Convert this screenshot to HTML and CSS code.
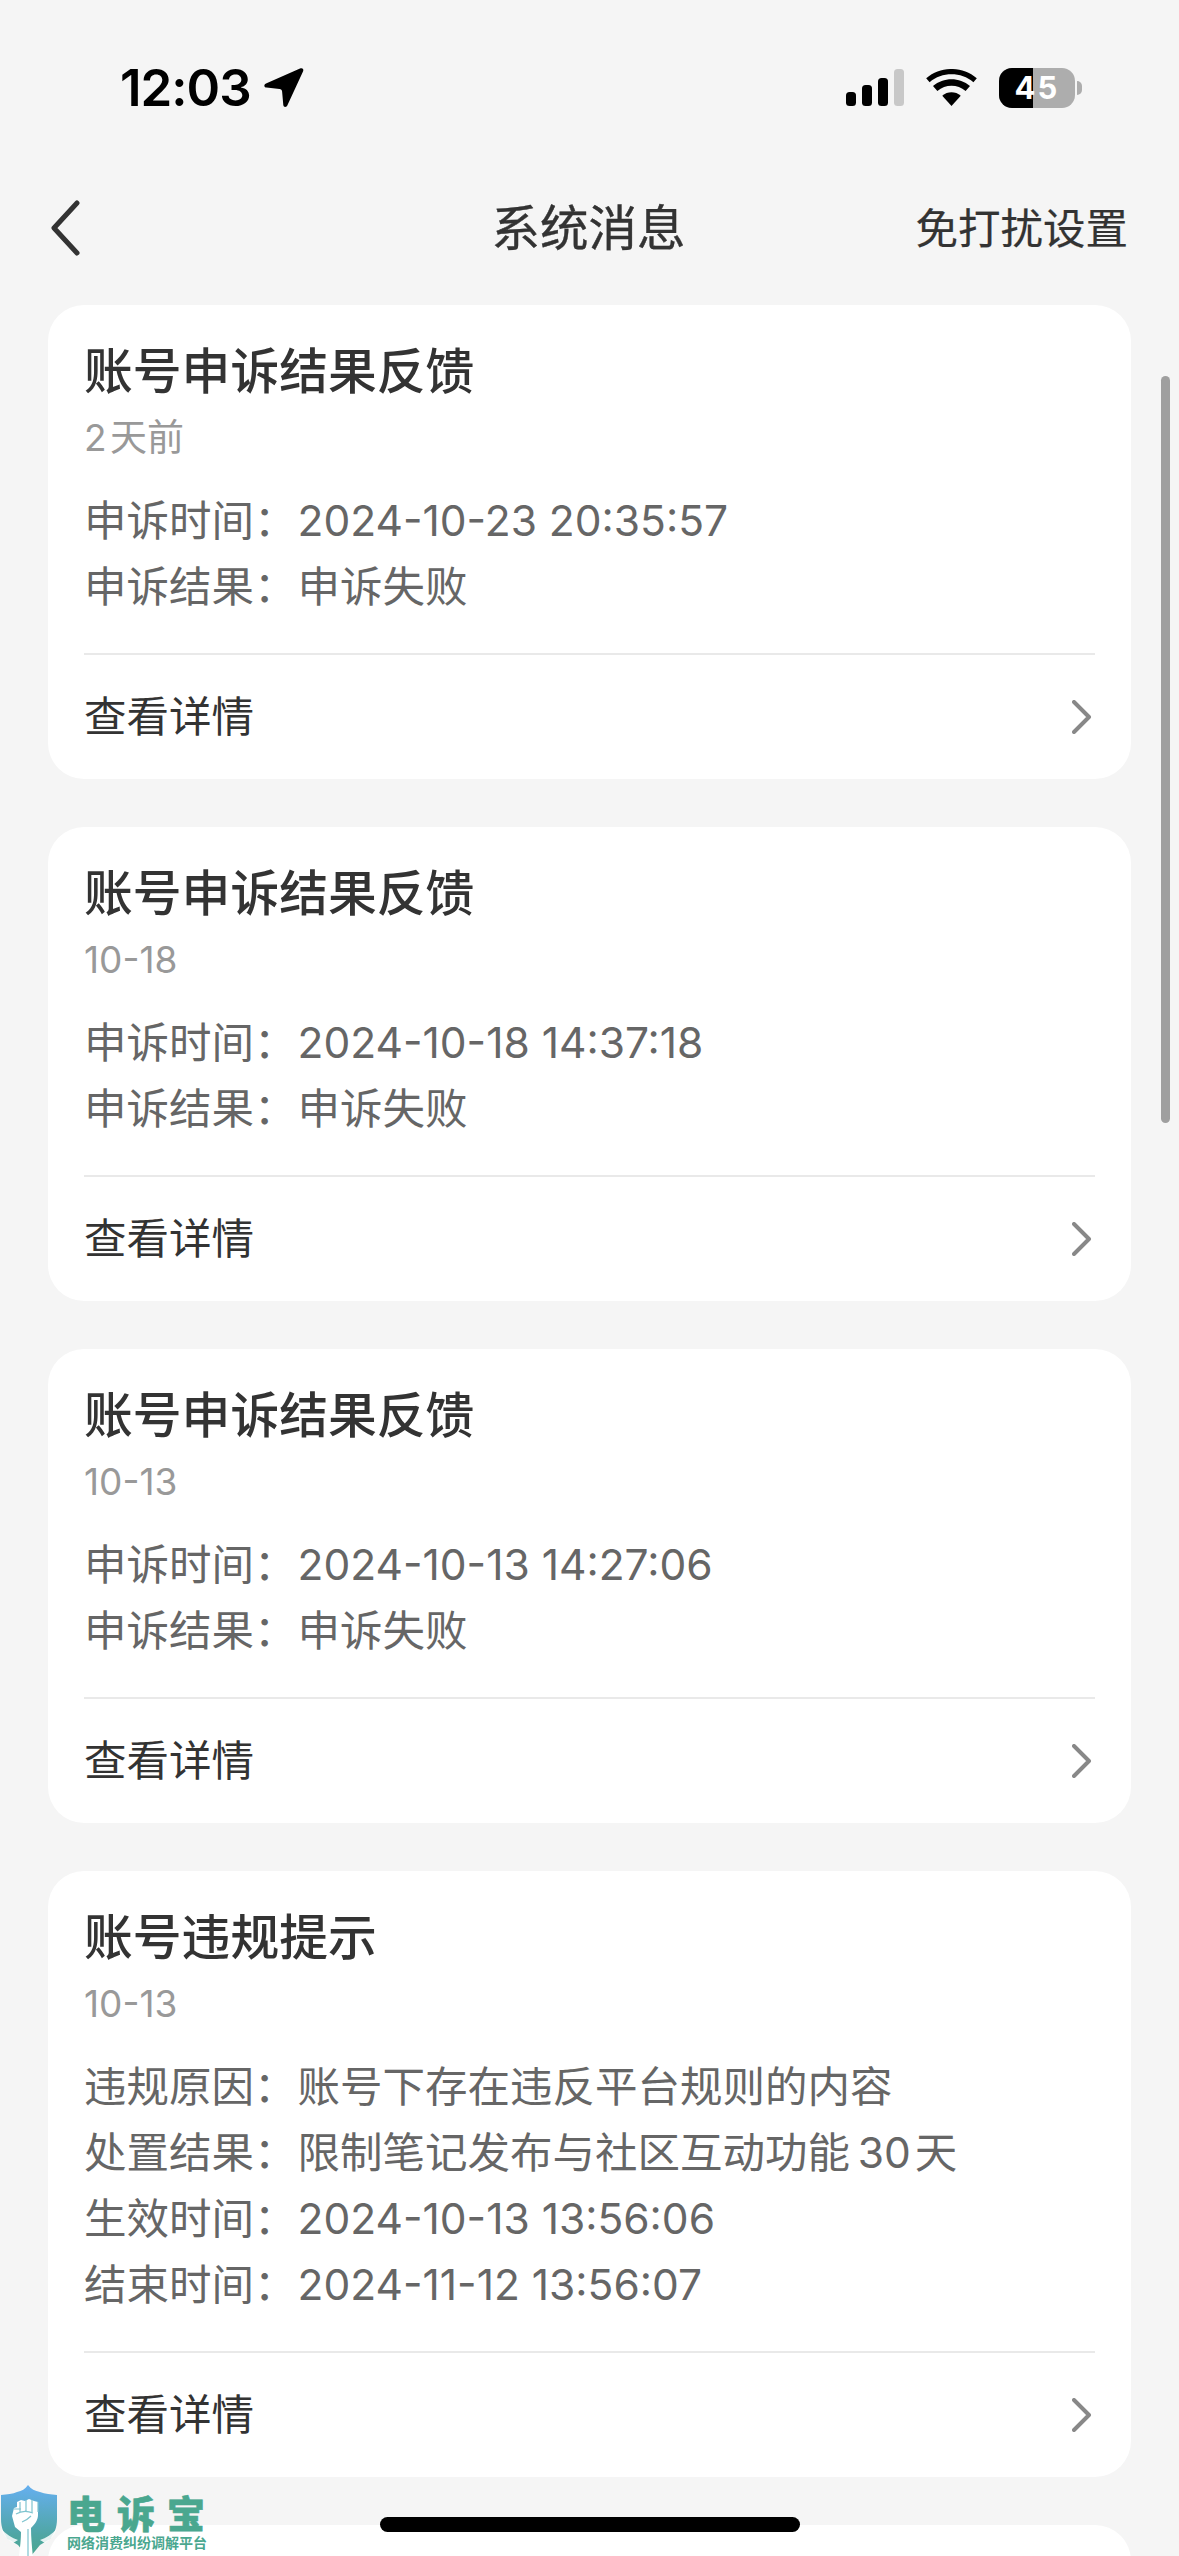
FILE: index.html
```html
<!DOCTYPE html>
<html lang="zh-CN">
<head>
<meta charset="UTF-8">
<title>系统消息</title>
<link rel="stylesheet" href="styles.css">
</head>
<body>
    <div class="status-bar">
        <div class="status-left">
            <span class="clock">12:03</span>
            <svg class="location" width="40" height="40" viewBox="0 0 40 40"><path d="M36 .5 2 15.500c-2.500 1.200-2 3.800.5 4l13 1.500c1.500.2 2.500 1 2.600 2.500l1.200 13.500c.2 2.300 3 2.700 4 .5L39 3.500c1-2.500-.5-4-3-3z"/></svg>
        </div>
        <div class="status-right">
            <svg class="signal" width="58" height="37" viewBox="0 0 58 37">
                <rect x="0" y="23" width="10" height="14" rx="3.500"/>
                <rect x="16" y="16" width="10" height="21" rx="3.500"/>
                <rect x="32" y="9" width="10" height="28" rx="3.500"/>
                <rect x="48" y="0" width="10" height="37" rx="3.500" fill="#c8c8c8"/>
            </svg>
            <svg class="wifi" width="51" height="37" viewBox="0 0 52 38">
                <path d="M26 38 16.500 27.500c5.500-4.700 13.500-4.700 19 0z"/>
                <path d="M11.500 22.500 7 17.500c10.800-9.300 27.200-9.300 38 0l-4.500 5c-8.300-7-20.700-7-29 0z"/>
                <path d="M3.500 13.500 0 9.500C15-3.200 37-3.200 52 9.500l-3.500 4C35.800 2.800 16.200 2.800 3.500 13.500z"/>
            </svg>
            <div class="battery">
                <div class="battery-body"><span class="battery-fill"></span><span class="battery-num">45</span></div>
                <span class="battery-tip"></span>
            </div>
        </div>
    </div>

    <div class="nav">
        <svg class="back" width="32" height="56" viewBox="0 0 32 56"><path d="M28 3 5 28l23 25" fill="none" stroke="#333" stroke-width="5" stroke-linecap="round" stroke-linejoin="round"/></svg>
        <div class="nav-title">系统消息</div>
        <div class="nav-action">免打扰设置</div>
    </div>

    <div class="list">
        <div class="card">
            <h2>账号申诉结果反馈</h2>
            <p class="meta">2&#8202;天前</p>
            <div class="rows">
                <p><span class="label">申诉时间：</span>2024-10-23 20:35:57</p>
                <p><span class="label">申诉结果：</span>申诉失败</p>
            </div>
            <div class="more">
                <span>查看详情</span>
                <svg width="20" height="34" viewBox="0 0 20 34"><path d="M2 2l15 15L2 32" fill="none" stroke="#888" stroke-width="4" stroke-linecap="round" stroke-linejoin="round"/></svg>
            </div>
        </div>
        <div class="card">
            <h2>账号申诉结果反馈</h2>
            <p class="meta">10-18</p>
            <div class="rows">
                <p><span class="label">申诉时间：</span>2024-10-18 14:37:18</p>
                <p><span class="label">申诉结果：</span>申诉失败</p>
            </div>
            <div class="more">
                <span>查看详情</span>
                <svg width="20" height="34" viewBox="0 0 20 34"><path d="M2 2l15 15L2 32" fill="none" stroke="#888" stroke-width="4" stroke-linecap="round" stroke-linejoin="round"/></svg>
            </div>
        </div>
        <div class="card">
            <h2>账号申诉结果反馈</h2>
            <p class="meta">10-13</p>
            <div class="rows">
                <p><span class="label">申诉时间：</span>2024-10-13 14:27:06</p>
                <p><span class="label">申诉结果：</span>申诉失败</p>
            </div>
            <div class="more">
                <span>查看详情</span>
                <svg width="20" height="34" viewBox="0 0 20 34"><path d="M2 2l15 15L2 32" fill="none" stroke="#888" stroke-width="4" stroke-linecap="round" stroke-linejoin="round"/></svg>
            </div>
        </div>
        <div class="card">
            <h2>账号违规提示</h2>
            <p class="meta">10-13</p>
            <div class="rows">
                <p><span class="label">违规原因：</span>账号下存在违反平台规则的内容</p>
                <p><span class="label">处置结果：</span>限制笔记发布与社区互动功能&#8201;30&#8202;天</p>
                <p><span class="label">生效时间：</span>2024-10-13 13:56:06</p>
                <p><span class="label">结束时间：</span>2024-11-12 13:56:07</p>
            </div>
            <div class="more">
                <span>查看详情</span>
                <svg width="20" height="34" viewBox="0 0 20 34"><path d="M2 2l15 15L2 32" fill="none" stroke="#888" stroke-width="4" stroke-linecap="round" stroke-linejoin="round"/></svg>
            </div>
        </div>
        <div class="card card-peek"></div>
    </div>

    <div class="scrollbar"></div>
    <div class="home-indicator"></div>

    <div class="watermark">
        <svg class="shield" width="58" height="71" viewBox="0 0 58 71">
            <defs>
                <linearGradient id="shieldFill" x1="0" y1="0" x2="0" y2="1">
                    <stop offset="0" stop-color="#66aff0"/>
                    <stop offset="0.7" stop-color="#4fa6a4"/>
                    <stop offset="1" stop-color="#4aa78f"/>
                </linearGradient>
            </defs>
            <path d="M28 0c3 4 7 6 12 7 5 2 11 2 17 3v24c0 9-3 15-7 20l-10 6-9 11h-4l-9-11-10-6C4 49 1 43 1 34V10c6-1 12-1 16-3 5-1 8-3 11-7z" fill="url(#shieldFill)"/>
            <path d="M1 44c3 7 7 11 12 14l5-3c-6-2-12-6-17-11zM57 44c-3 7-7 11-12 14l-5-3c6-2 12-6 17-11z" fill="#fff" opacity="0.85"/>
            <path d="M19 71c1-9 2-16 2-24l-6-5-3-11 2-8 3-1V17l4-2 4 1 4-2 5 2 4 1v13c0 5-3 9-7 13 0 10 1 19 2 30z" fill="#fff"/>
            <path d="M20 17v10M26 15v12M32 15v12M38 17v10M14 24h7M16 29c5-3 12-3 17-1M22 37c3-1 6-3 9-6M28 44v27" fill="none" stroke="#7fc4cf" stroke-width="1.200"/>
        </svg>
        <div class="watermark-text">
            <div class="watermark-name">电诉宝</div>
            <div class="watermark-sub">网络消费纠纷调解平台</div>
        </div>
    </div>
</body>
</html>
```

FILE: styles.css
```css
* {
    box-sizing: border-box;
}

html, body {
    margin: 0;
    height: 2556px;
    overflow: hidden;
}

body {
    position: relative;
    background: #f5f5f5;
    font-family: "Inter", "Noto Sans CJK SC", sans-serif;
    color: #333;
}

p, h2 {
    margin: 0;
    font-weight: 400;
}

.status-bar {
    display: flex;
    justify-content: space-between;
    align-items: flex-start;
    height: 167px;
    padding: 67px 97px 0 120px;
}

.status-left {
    display: flex;
    align-items: center;
    gap: 13px;
    height: 41px;
}

.clock {
    font-size: 51px;
    font-weight: 600;
    line-height: 41px;
    letter-spacing: -1px;
    color: #000;
}

.status-right {
    display: flex;
    align-items: center;
    gap: 22px;
    height: 41px;
}

.battery {
    display: flex;
    align-items: center;
    gap: 2px;
}

.battery-body {
    position: relative;
    width: 76px;
    height: 40px;
    border-radius: 13px;
    background: #adadad;
    overflow: hidden;
    display: flex;
    align-items: center;
    justify-content: center;
}

.battery-fill {
    position: absolute;
    left: 0;
    top: 0;
    bottom: 0;
    width: 34px;
    background: #000;
}

.battery-num {
    position: relative;
    font-size: 31px;
    font-weight: 700;
    letter-spacing: 2px;
    color: #fff;
}

.battery-tip {
    width: 5px;
    height: 14px;
    border-radius: 0 6px 6px 0;
    background: #adadad;
}

.nav {
    display: grid;
    grid-template-columns: 1fr auto 1fr;
    align-items: center;
    height: 120px;
    padding: 0 51px 0 49px;
}

.nav-title {
    font-size: 48.500px;
    line-height: 120px;
    padding-top: 2px;
    -webkit-text-stroke: 0.4px #333;
}

.nav-action {
    font-size: 42.500px;
    justify-self: end;
    padding-bottom: 6px;
    -webkit-text-stroke: 0.2px #333;
}

.list {
    display: flex;
    flex-direction: column;
    gap: 48px;
    padding: 18px 48px 0;
}

.card {
    flex: none;
    background: #fff;
    border-radius: 36px;
    padding: 34px 36px 0;
}

.card-peek {
    height: 120px;
}

.card h2 {
    font-size: 48.800px;
    font-weight: 500;
    line-height: 66px;
    color: #333;
}

.meta {
    margin-top: 10px;
    font-size: 37px;
    line-height: 46px;
    color: #999;
}

.rows {
    margin-top: 27px;
    padding-bottom: 33px;
    border-bottom: 2px solid #e9e9e9;
    font-size: 42.500px;
    line-height: 66px;
    color: #666;
}

.label {
    margin-right: 1px;
}

.more {
    display: flex;
    justify-content: space-between;
    align-items: center;
    height: 124px;
    padding-right: 3px;
    font-size: 42.500px;
    color: #333;
}

.more span {
    padding-bottom: 7px;
}

.scrollbar {
    position: absolute;
    left: 1161px;
    top: 376px;
    width: 9px;
    height: 747px;
    border-radius: 5px;
    background: #9f9f9f;
}

.home-indicator {
    position: absolute;
    left: 380px;
    top: 2517px;
    width: 420px;
    height: 15px;
    border-radius: 8px;
    background: #000;
}

.watermark {
    position: absolute;
    left: 0;
    top: 2485px;
    display: flex;
    gap: 9px;
    color: #4aa78f;
}

.watermark-text {
    padding-top: 6px;
}

.watermark-name {
    font-size: 38px;
    font-weight: 900;
    line-height: 46px;
    letter-spacing: 12px;
    -webkit-text-stroke: 0.6px #4aa78f;
}

.watermark-sub {
    margin-top: -2px;
    font-size: 14px;
    font-weight: 700;
    line-height: 16px;
}
```
